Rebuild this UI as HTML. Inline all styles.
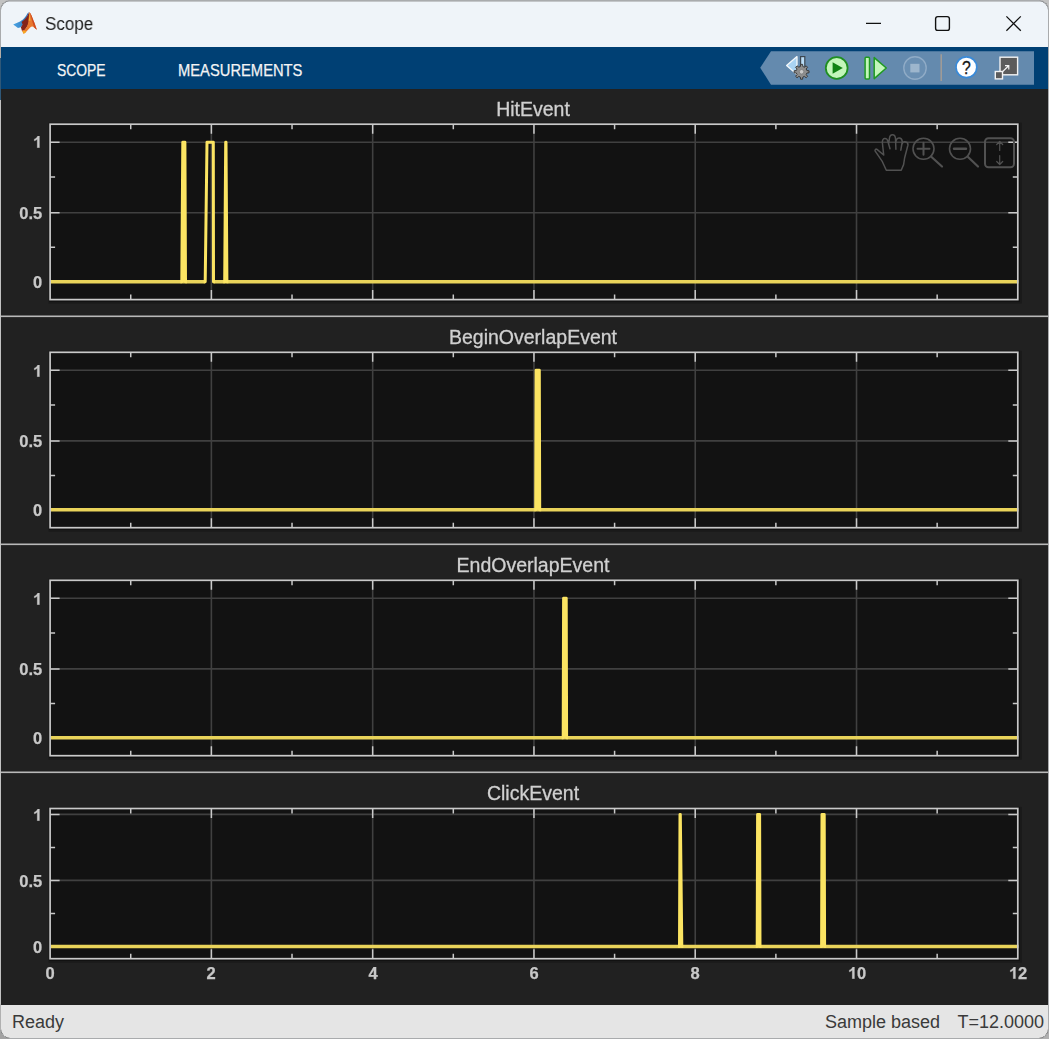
<!DOCTYPE html>
<html><head><meta charset="utf-8"><title>Scope</title>
<style>
html,body{margin:0;padding:0;}
body{width:1049px;height:1039px;overflow:hidden;background:#c2c2c2;font-family:"Liberation Sans",sans-serif;position:relative;}
.win{position:absolute;left:0;top:0;width:1047px;height:1037px;border:1px solid #a9abad;border-top-width:1.5px;border-radius:10px;overflow:hidden;background:#212121;}
.abs{position:absolute;}
.titlebar{position:absolute;left:-1px;top:-1px;width:1049px;height:47px;background:#eff4f9;}
.wtitle{will-change:transform;position:absolute;left:44.5px;top:13.3px;font-size:18px;line-height:22px;color:#1c1c1c;transform-origin:0 50%;transform:scaleX(0.945);white-space:nowrap;}
.ribbon{position:absolute;left:-1px;top:46px;width:1049px;height:42px;background:#004074;}
.tab{position:absolute;top:12.5px;font-size:16.5px;line-height:20px;color:#f4f4f4;-webkit-text-stroke:0.25px #f4f4f4;white-space:nowrap;transform-origin:0 50%;}
.plotarea{position:absolute;left:-1px;top:-1px;width:1049px;height:1039px;}
.plots{position:absolute;left:0;top:0;}
.yl{position:absolute;left:0;width:42.3px;will-change:transform;text-align:right;font-size:16.5px;line-height:19px;font-weight:bold;color:#c8c8c8;-webkit-text-stroke:0.25px #c8c8c8;white-space:nowrap;}
.xl{will-change:transform;position:absolute;top:964px;width:40px;text-align:center;font-size:16.5px;line-height:19px;font-weight:bold;color:#c8c8c8;-webkit-text-stroke:0.25px #c8c8c8;white-space:nowrap;}
.one{display:inline-block;width:9.17px;height:11.86px;vertical-align:baseline;}
.ttl{will-change:transform;position:absolute;left:332.6px;width:400px;text-align:center;font-size:19.5px;line-height:24px;color:#d0d0d0;-webkit-text-stroke:0.3px #d0d0d0;white-space:nowrap;}
.status{position:absolute;left:-1px;top:1004px;width:1049px;height:35px;background:#e5e5e5;color:#3a3a3a;font-size:18px;line-height:22px;}
.status div{position:absolute;top:6px;white-space:nowrap;}
</style></head>
<body>
<div class="abs" style="left:0;top:1027px;width:12px;height:12px;background:#a2a2a2"></div><div class="abs" style="left:1037px;top:1027px;width:12px;height:12px;background:#b0b0b0"></div>
<div class="win">
<div class="plotarea">
<svg class="plots" width="1049" height="1039" viewBox="0 0 1049 1039">
<rect x="48.5" y="122.60000000000001" width="973.3" height="181.00000000000003" fill="#1a1a1a"/>
<rect x="49.1" y="123.2" width="970.9" height="178.60000000000002" fill="#111111"/>
<rect x="50.1" y="124.2" width="967.6999999999999" height="175.40000000000003" fill="#121212"/>
<path d="M211.38 124.2 V299.6 M372.67 124.2 V299.6 M533.95 124.2 V299.6 M695.23 124.2 V299.6 M856.52 124.2 V299.6 M50.1 142.20 H1017.8 M50.1 212.80 H1017.8" stroke="#404040" stroke-width="1.6" fill="none"/>
<path d="M130.74 124.2 v5 M130.74 299.6 v-5 M211.38 124.2 v9.5 M211.38 299.6 v-9.5 M292.02 124.2 v5 M292.02 299.6 v-5 M372.67 124.2 v9.5 M372.67 299.6 v-9.5 M453.31 124.2 v5 M453.31 299.6 v-5 M533.95 124.2 v9.5 M533.95 299.6 v-9.5 M614.59 124.2 v5 M614.59 299.6 v-5 M695.23 124.2 v9.5 M695.23 299.6 v-9.5 M775.88 124.2 v5 M775.88 299.6 v-5 M856.52 124.2 v9.5 M856.52 299.6 v-9.5 M937.16 124.2 v5 M937.16 299.6 v-5 M50.1 142.20 h9.5 M1017.8 142.20 h-9.5 M50.1 177.00 h5 M1017.8 177.00 h-5 M50.1 212.80 h9.5 M1017.8 212.80 h-9.5 M50.1 247.30 h5 M1017.8 247.30 h-5" stroke="#c9c9c9" stroke-width="1.5" fill="none"/>
<path d="M50.1 281.7 H205.2 M213.5 281.7 H1018.4" stroke="#e9d35a" stroke-width="3.5" fill="none"/>
<path d="M180.3 281.7 L181.8 281.7 L182.8 142.2 L184.9 142.2 L185.5 281.7 L187.0 281.7" stroke="#fbe462" stroke-width="3" fill="#fbe462" stroke-linejoin="round"/><path d="M203.7 281.7 L205.2 281.7 L207.0 142.2 L213.3 142.2 L213.5 281.7 L215.0 281.7" stroke="#fbe462" stroke-width="3" fill="none" stroke-linejoin="round"/><path d="M223.2 281.7 L224.7 281.7 L225.7 142.2 L226.0 142.2 L226.9 281.7 L228.4 281.7" stroke="#fbe462" stroke-width="3" fill="#fbe462" stroke-linejoin="round"/>
<rect x="50.1" y="124.2" width="967.6999999999999" height="175.40000000000003" fill="none" stroke="#c9c9c9" stroke-width="1.7"/>
<rect x="48.5" y="350.7" width="973.3" height="181.00000000000003" fill="#1a1a1a"/>
<rect x="49.1" y="351.3" width="970.9" height="178.60000000000002" fill="#111111"/>
<rect x="50.1" y="352.3" width="967.6999999999999" height="175.40000000000003" fill="#121212"/>
<path d="M211.38 352.3 V527.7 M372.67 352.3 V527.7 M533.95 352.3 V527.7 M695.23 352.3 V527.7 M856.52 352.3 V527.7 M50.1 370.30 H1017.8 M50.1 440.90 H1017.8" stroke="#404040" stroke-width="1.6" fill="none"/>
<path d="M130.74 352.3 v5 M130.74 527.7 v-5 M211.38 352.3 v9.5 M211.38 527.7 v-9.5 M292.02 352.3 v5 M292.02 527.7 v-5 M372.67 352.3 v9.5 M372.67 527.7 v-9.5 M453.31 352.3 v5 M453.31 527.7 v-5 M533.95 352.3 v9.5 M533.95 527.7 v-9.5 M614.59 352.3 v5 M614.59 527.7 v-5 M695.23 352.3 v9.5 M695.23 527.7 v-9.5 M775.88 352.3 v5 M775.88 527.7 v-5 M856.52 352.3 v9.5 M856.52 527.7 v-9.5 M937.16 352.3 v5 M937.16 527.7 v-5 M50.1 370.30 h9.5 M1017.8 370.30 h-9.5 M50.1 405.10 h5 M1017.8 405.10 h-5 M50.1 440.90 h9.5 M1017.8 440.90 h-9.5 M50.1 475.40 h5 M1017.8 475.40 h-5" stroke="#c9c9c9" stroke-width="1.5" fill="none"/>
<path d="M50.1 509.79999999999995 H1018.4" stroke="#e9d35a" stroke-width="3.5" fill="none"/>
<path d="M534.2 509.79999999999995 L535.7 509.79999999999995 L536.1 370.29999999999995 L539.3 370.29999999999995 L539.7 509.79999999999995 L541.2 509.79999999999995" stroke="#fbe462" stroke-width="3" fill="#fbe462" stroke-linejoin="round"/>
<rect x="50.1" y="352.3" width="967.6999999999999" height="175.40000000000003" fill="none" stroke="#c9c9c9" stroke-width="1.7"/>
<rect x="48.5" y="578.7" width="973.3" height="180.99999999999997" fill="#1a1a1a"/>
<rect x="49.1" y="579.3000000000001" width="970.9" height="178.59999999999997" fill="#111111"/>
<rect x="50.1" y="580.3000000000001" width="967.6999999999999" height="175.39999999999998" fill="#121212"/>
<path d="M211.38 580.3000000000001 V755.7 M372.67 580.3000000000001 V755.7 M533.95 580.3000000000001 V755.7 M695.23 580.3000000000001 V755.7 M856.52 580.3000000000001 V755.7 M50.1 598.30 H1017.8 M50.1 668.90 H1017.8" stroke="#404040" stroke-width="1.6" fill="none"/>
<path d="M130.74 580.3000000000001 v5 M130.74 755.7 v-5 M211.38 580.3000000000001 v9.5 M211.38 755.7 v-9.5 M292.02 580.3000000000001 v5 M292.02 755.7 v-5 M372.67 580.3000000000001 v9.5 M372.67 755.7 v-9.5 M453.31 580.3000000000001 v5 M453.31 755.7 v-5 M533.95 580.3000000000001 v9.5 M533.95 755.7 v-9.5 M614.59 580.3000000000001 v5 M614.59 755.7 v-5 M695.23 580.3000000000001 v9.5 M695.23 755.7 v-9.5 M775.88 580.3000000000001 v5 M775.88 755.7 v-5 M856.52 580.3000000000001 v9.5 M856.52 755.7 v-9.5 M937.16 580.3000000000001 v5 M937.16 755.7 v-5 M50.1 598.30 h9.5 M1017.8 598.30 h-9.5 M50.1 633.10 h5 M1017.8 633.10 h-5 M50.1 668.90 h9.5 M1017.8 668.90 h-9.5 M50.1 703.40 h5 M1017.8 703.40 h-5" stroke="#c9c9c9" stroke-width="1.5" fill="none"/>
<path d="M50.1 737.8 H1018.4" stroke="#e9d35a" stroke-width="3.5" fill="none"/>
<path d="M561.7 737.8 L563.2 737.8 L563.6 598.3 L566.2 598.3 L566.6 737.8 L568.1 737.8" stroke="#fbe462" stroke-width="3" fill="#fbe462" stroke-linejoin="round"/>
<rect x="50.1" y="580.3000000000001" width="967.6999999999999" height="175.39999999999998" fill="none" stroke="#c9c9c9" stroke-width="1.7"/>
<rect x="48.5" y="806.9" width="973.3" height="155.80000000000004" fill="#1a1a1a"/>
<rect x="49.1" y="807.5" width="970.9" height="153.40000000000003" fill="#111111"/>
<rect x="50.1" y="808.5" width="967.6999999999999" height="150.20000000000005" fill="#121212"/>
<path d="M211.38 808.5 V958.7 M372.67 808.5 V958.7 M533.95 808.5 V958.7 M695.23 808.5 V958.7 M856.52 808.5 V958.7 M50.1 814.40 H1017.8 M50.1 880.40 H1017.8" stroke="#404040" stroke-width="1.6" fill="none"/>
<path d="M130.74 808.5 v5 M130.74 958.7 v-5 M211.38 808.5 v9.5 M211.38 958.7 v-9.5 M292.02 808.5 v5 M292.02 958.7 v-5 M372.67 808.5 v9.5 M372.67 958.7 v-9.5 M453.31 808.5 v5 M453.31 958.7 v-5 M533.95 808.5 v9.5 M533.95 958.7 v-9.5 M614.59 808.5 v5 M614.59 958.7 v-5 M695.23 808.5 v9.5 M695.23 958.7 v-9.5 M775.88 808.5 v5 M775.88 958.7 v-5 M856.52 808.5 v9.5 M856.52 958.7 v-9.5 M937.16 808.5 v5 M937.16 958.7 v-5 M50.1 814.40 h9.5 M1017.8 814.40 h-9.5 M50.1 847.40 h5 M1017.8 847.40 h-5 M50.1 880.40 h9.5 M1017.8 880.40 h-9.5 M50.1 913.50 h5 M1017.8 913.50 h-5" stroke="#c9c9c9" stroke-width="1.5" fill="none"/>
<path d="M50.1 946.5 H1018.4" stroke="#e9d35a" stroke-width="3.5" fill="none"/>
<path d="M678.0 946.5 L679.5 946.5 L680.0 814.4 L680.3 814.4 L681.8 946.5 L683.3 946.5" stroke="#fbe462" stroke-width="3" fill="#fbe462" stroke-linejoin="round"/><path d="M755.7 946.5 L757.2 946.5 L757.6 814.4 L759.6 814.4 L760.0 946.5 L761.5 946.5" stroke="#fbe462" stroke-width="3" fill="#fbe462" stroke-linejoin="round"/><path d="M820.1 946.5 L821.6 946.5 L822.0 814.4 L824.2 814.4 L824.6 946.5 L826.1 946.5" stroke="#fbe462" stroke-width="3" fill="#fbe462" stroke-linejoin="round"/>
<rect x="50.1" y="808.5" width="967.6999999999999" height="150.20000000000005" fill="none" stroke="#c9c9c9" stroke-width="1.7"/>
<rect x="1" y="315.5" width="1047" height="1.6" fill="#b9b9b9"/>
<rect x="1" y="543.5" width="1047" height="1.6" fill="#b9b9b9"/>
<rect x="1" y="771.5" width="1047" height="1.6" fill="#b9b9b9"/>
<g fill="none" stroke="#515151" stroke-width="1.6" stroke-linecap="round" stroke-linejoin="round">
<path d="M901.2 170.3 L886.3 170.3 L882.4 161.7 L875.2 151.2 C874.6 150 875.8 148.6 877 149.4 L883.7 155 L882.4 143 C882 137.6 887 137 887.9 141.5 L890 148.8 M888.7 143.5 L889.4 138.5 C890 133.6 895 133.6 895.5 138.5 L895.9 149.2 M895.8 142.5 C896.2 136.6 901.6 136.6 902.3 141.5 L900.8 150.2 M902.2 143.6 C903.4 140.6 908.6 141.6 907.9 145.2 L904.6 158 L903.6 164.6 L901.2 170.3" stroke-width="1.5"/>
<circle cx="923.5" cy="148.8" r="10.5"/><path d="M931 156.5 L942 166.5" stroke-width="2.2"/><path d="M917.5 148.8 H929.5 M923.5 142.8 V154.8" stroke-width="2"/>
<circle cx="960" cy="148.8" r="10.5"/><path d="M967.5 156.5 L978 166.5" stroke-width="2.2"/><path d="M954 148.8 H966" stroke-width="2.4"/>
<rect x="985" y="138.3" width="29" height="29" rx="3.5" stroke-width="2"/>
<path d="M999.7 141.5 V150.5 M996.7 144.5 L999.7 141.5 L1002.7 144.5 M999.7 155.5 V164.5 M996.7 161.5 L999.7 164.5 L1002.7 161.5" stroke-width="1.2"/>
</g>
</svg>
<div class="yl" style="top:133.4px"><svg class="one" viewBox="0 -1472 1139 1472"><path fill="#c8c8c8" stroke="#c8c8c8" stroke-width="30" d="M806 0H525V-1059Q371 -915 162 -846V-1101Q272 -1137 401 -1237.5Q530 -1338 578 -1472H806Z"/></svg></div>
<div class="yl" style="top:204.0px">0.5</div>
<div class="yl" style="top:272.9px">0</div>
<div class="ttl" style="top:97.3px">HitEvent</div>
<div class="yl" style="top:361.5px"><svg class="one" viewBox="0 -1472 1139 1472"><path fill="#c8c8c8" stroke="#c8c8c8" stroke-width="30" d="M806 0H525V-1059Q371 -915 162 -846V-1101Q272 -1137 401 -1237.5Q530 -1338 578 -1472H806Z"/></svg></div>
<div class="yl" style="top:432.1px">0.5</div>
<div class="yl" style="top:501.0px">0</div>
<div class="ttl" style="top:325.4px">BeginOverlapEvent</div>
<div class="yl" style="top:589.5px"><svg class="one" viewBox="0 -1472 1139 1472"><path fill="#c8c8c8" stroke="#c8c8c8" stroke-width="30" d="M806 0H525V-1059Q371 -915 162 -846V-1101Q272 -1137 401 -1237.5Q530 -1338 578 -1472H806Z"/></svg></div>
<div class="yl" style="top:660.1px">0.5</div>
<div class="yl" style="top:729.0px">0</div>
<div class="ttl" style="top:553.4px">EndOverlapEvent</div>
<div class="yl" style="top:805.6px"><svg class="one" viewBox="0 -1472 1139 1472"><path fill="#c8c8c8" stroke="#c8c8c8" stroke-width="30" d="M806 0H525V-1059Q371 -915 162 -846V-1101Q272 -1137 401 -1237.5Q530 -1338 578 -1472H806Z"/></svg></div>
<div class="yl" style="top:871.6px">0.5</div>
<div class="yl" style="top:937.7px">0</div>
<div class="ttl" style="top:781.3px">ClickEvent</div>
<div class="xl" style="left:30.1px">0</div>
<div class="xl" style="left:191.4px">2</div>
<div class="xl" style="left:352.7px">4</div>
<div class="xl" style="left:513.9px">6</div>
<div class="xl" style="left:675.2px">8</div>
<div class="xl" style="left:836.5px"><svg class="one" viewBox="0 -1472 1139 1472"><path fill="#c8c8c8" stroke="#c8c8c8" stroke-width="30" d="M806 0H525V-1059Q371 -915 162 -846V-1101Q272 -1137 401 -1237.5Q530 -1338 578 -1472H806Z"/></svg>0</div>
<div class="xl" style="left:997.8px"><svg class="one" viewBox="0 -1472 1139 1472"><path fill="#c8c8c8" stroke="#c8c8c8" stroke-width="30" d="M806 0H525V-1059Q371 -915 162 -846V-1101Q272 -1137 401 -1237.5Q530 -1338 578 -1472H806Z"/></svg>2</div>
</div>
<div class="titlebar">
<svg class="abs" style="left:0;top:0" width="1049" height="48" viewBox="0 0 1049 48">
<defs><linearGradient id="lgb" x1="0" y1="0" x2="1" y2="0"><stop offset="0" stop-color="#4aa6e6"/><stop offset="1" stop-color="#2f6fb5"/></linearGradient></defs>
<path d="M13.2 24.4 L20.1 21.4 C22 20.3 23.4 19.2 24.6 17.8 C25.8 16.4 26.6 14.8 27.4 13.4 L28.9 12.1 L27.4 16.4 L22.9 24.5 L20.8 27.2 L18 28 Z" fill="url(#lgb)"/>
<path d="M21.6 21.9 C23 21 24.6 19.8 25.8 18.3 C26.9 16.9 27.8 15.2 28.6 13.6 C28.9 13 29.1 12.5 29.3 12.2 L29.6 20.6 L27.6 26 L24.8 30 L22 31 L20.9 27.2 L22.6 24.6 Z" fill="#84231a"/>
<path d="M29.3 12.2 C30.4 12.8 31.3 15 32.3 17.4 C33.2 19.6 33.8 21.2 34.3 22.6 C35.2 25 36 27.8 36.9 29.8 C36.2 29.3 35.6 28.7 35 28.2 C34.2 27.4 33.3 26.5 32.3 26.4 C31.5 26.4 30.8 26.9 30.2 27.5 C29.2 28.5 28.3 29.6 27.4 30.6 C26.2 31.9 24.8 33.3 23.6 33.8 L21.9 30.6 C23 30.4 24 30.2 24.8 29.5 C26 28.4 26.9 27 27.5 25.3 C28 23.8 28.3 22.2 28.5 20.6 C28.8 17.8 28.9 14.2 29.3 12.2 Z" fill="#e8772f"/>
<path d="M29.5 12.3 C30.4 12.8 31.3 15 32.3 17.4 C33.2 19.6 33.8 21.2 34.3 22.6 C35.2 25 36 27.8 36.9 29.8 C35.9 29 35 28.1 34.3 27.4 C33.4 25 32.8 23.2 32.3 21.4 C31.7 19.2 31.1 16.8 30.5 14.7 Z" fill="#cf4a1f"/>
<path d="M29.5 13.4 L30.4 20.8 L28.7 20.8 Z" fill="#f8b433"/>
<path d="M22.4 31.2 L25.2 30.6 L26.2 32.1 C25.3 32.9 24.4 33.6 23.6 33.8 Z" fill="#f7a823"/>
<g fill="none" stroke="#111" stroke-width="1.25">
<path d="M866 23.4 H881"/>
<rect x="935.6" y="16.6" width="13.8" height="13.8" rx="2.2" stroke-width="1.4"/>
<path d="M1006.4 16.4 L1020.8 30.8 M1020.8 16.4 L1006.4 30.8"/>
</g></svg>
<div class="wtitle">Scope</div>
</div>
<div class="ribbon">
<div class="tab" style="left:56.5px;transform:scaleX(0.84)">SCOPE</div>
<div class="tab" style="left:178px;transform:scaleX(0.893)">MEASUREMENTS</div>
<svg class="abs" style="left:0;top:0" width="1049" height="42" viewBox="0 47 1049 42">
<path d="M760.2 67.8 L771 51.3 H1034 V84.7 H771 Z" fill="#648aae"/>
<path d="M786.6 65.6 L797 56.6 V74.4 Z" fill="#a9d3f3" stroke="#f4f8fb" stroke-width="1.3" stroke-linejoin="round"/>
<rect x="800.6" y="56.6" width="4.2" height="12" fill="#b9dcf6" stroke="#3c4650" stroke-width="1.2"/>
<path d="M806.85 70.54 L809.03 70.80 L809.03 72.80 L806.85 73.06 L806.20 74.62 L807.56 76.35 L806.15 77.76 L804.42 76.40 L802.86 77.05 L802.60 79.23 L800.60 79.23 L800.34 77.05 L798.78 76.40 L797.05 77.76 L795.64 76.35 L797.00 74.62 L796.35 73.06 L794.17 72.80 L794.17 70.80 L796.35 70.54 L797.00 68.98 L795.64 67.25 L797.05 65.84 L798.78 67.20 L800.34 66.55 L800.60 64.37 L802.60 64.37 L802.86 66.55 L804.42 67.20 L806.15 65.84 L807.56 67.25 L806.20 68.98 Z" fill="#8e8e8e" stroke="#3a3a3a" stroke-width="1" stroke-linejoin="round"/>
<circle cx="801.6" cy="71.8" r="2.3" fill="#c9c9c9" stroke="#7a7a7a" stroke-width="0.8"/>
<circle cx="836.7" cy="68" r="10.9" fill="#c3f6ba" stroke="#1f8f22" stroke-width="1.8"/>
<path d="M832.6 62.2 L842.8 68 L832.6 73.8 Z" fill="#108212"/>
<rect x="865.1" y="57.2" width="4.4" height="21.8" rx="1" fill="#c3f6ba" stroke="#1f9a22" stroke-width="1.5"/>
<path d="M874.2 57.6 L886.3 68 L874.2 78.6 Z" fill="#c3f6ba" stroke="#1f9a22" stroke-width="1.5" stroke-linejoin="round"/>
<circle cx="915" cy="68" r="11.2" fill="#6a8fb2" stroke="#8fabc6" stroke-width="1.4"/>
<rect x="910.3" y="63.8" width="9.2" height="8.6" fill="#9db6cd"/>
<path d="M941.2 54.3 V81" stroke="#a39c96" stroke-width="1.5"/>
<circle cx="966.4" cy="67.2" r="10.4" fill="#ffffff" stroke="#3a8ad8" stroke-width="1.7"/>
<text x="966.5" y="73.6" text-anchor="middle" font-family="Liberation Sans, sans-serif" font-size="18" fill="#151515" stroke="#151515" stroke-width="0.3" transform="translate(966.5 0) scale(0.88 1) translate(-966.5 0)">?</text>
<rect x="1000" y="57.2" width="17.6" height="17.6" fill="#5b5b5b" stroke="#f2f2f2" stroke-width="1.4"/>
<rect x="995.3" y="71.5" width="7.2" height="7.4" fill="#5b5b5b" stroke="#f2f2f2" stroke-width="1.4"/>
<path d="M1002.2 72 L1008.4 66 M1005 65.6 H1008.8 V69.4" fill="none" stroke="#f2f2f2" stroke-width="1.15"/>
</svg>
</div>
<div class="status">
<div style="left:12px">Ready</div>
<div style="left:825px">Sample based</div>
<div style="left:957.5px">T=12.0000</div>
</div>
</div>
<div class="abs" style="left:0;top:9px;width:1px;height:1021px;background:linear-gradient(#a9abad 0,#a9abad 37px,#b3aca6 37px,#b3aca6 49px,#2f5878 49px,#2f5878 91px,#c2c2c2 91px,#c2c2c2 995px,#b0b0b0 995px)"></div>
<div class="abs" style="left:9px;top:1px;width:1031px;height:1px;background:#c3c6c9"></div>
</body></html>
